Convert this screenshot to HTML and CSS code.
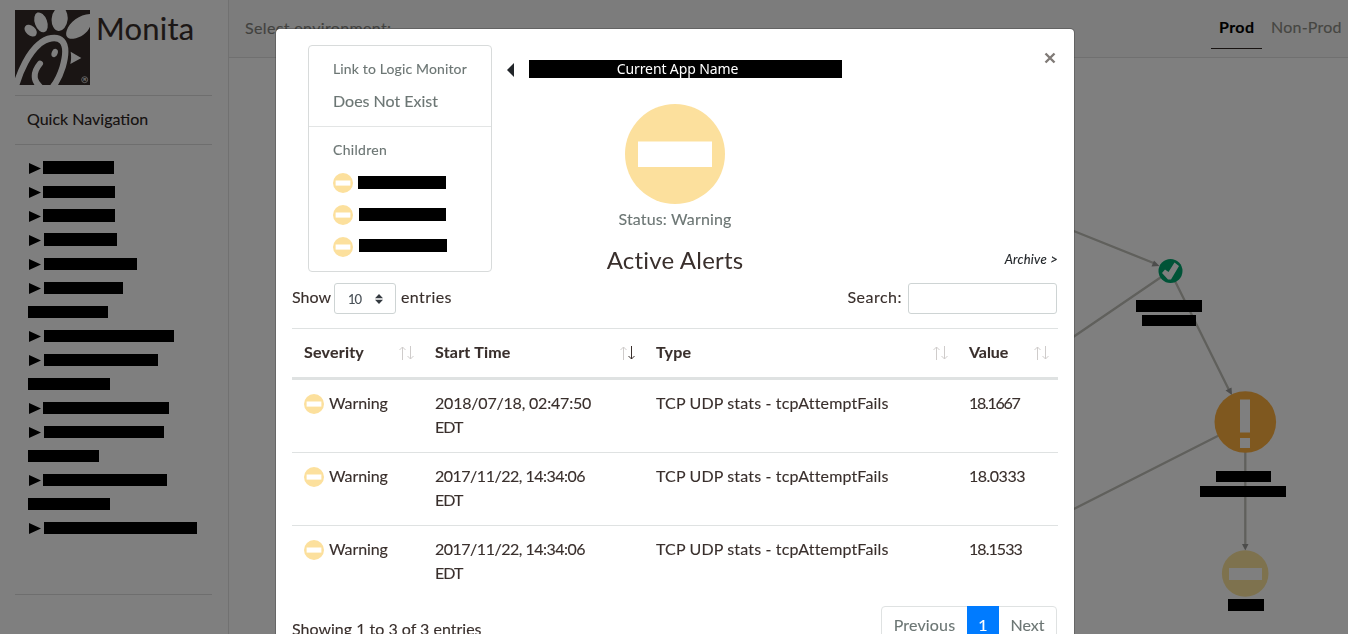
FILE: index.html
```html
<!DOCTYPE html>
<html lang="en">
<head>
<meta charset="utf-8">
<title>Monita</title>
<link rel="stylesheet" href="styles.css">
</head>
<body>
<svg class="defs" width="0" height="0">
  <symbol id="warn" viewBox="0 0 100 100"><circle cx="50" cy="50" r="50" fill="#fce09d"/><rect x="13" y="37.500" width="74" height="25.500" fill="#fff"/></symbol>
  <symbol id="tri" viewBox="0 0 12 11"><path d="M0 0L12 5.500L0 11Z" fill="#000"/></symbol>
  <symbol id="sort-up" viewBox="0 0 7 14"><path d="M3.500 14V1M.5 4L3.500 1L6.500 4"/></symbol>
  <symbol id="sort-down" viewBox="0 0 7 14"><path d="M3.500 0V13M.5 10L3.500 13L6.500 10"/></symbol>
</svg>
<div class="app">
  <aside class="sidebar">
    <div class="brand">
      <svg class="logo" viewBox="15 15 225 225">
        <rect x="15" y="15" width="225" height="225" fill="#342b29"/>
        <g fill="#fff">
          <ellipse cx="62" cy="77" rx="14.500" ry="21" transform="rotate(-50 62 77)"/>
          <ellipse cx="93" cy="52" rx="18.500" ry="31" transform="rotate(-20 93 52)"/>
          <ellipse cx="149" cy="42" rx="24" ry="36" transform="rotate(6 149 42)"/>
          <path d="M240 27V65C232 84 212 98 190 101C172 103 165 93 170 77C178 51 209 28 240 27Z"/>
          <ellipse cx="134" cy="144" rx="9" ry="13" transform="rotate(20 134 144)"/>
          <path d="M182 140L214 159L181 177C184 165 184 152 182 140Z"/>
        </g>
        <path d="M15 253C30 195 58 142 88 117C108 99 141 92 156 108C172 125 166 158 158 186C152 206 144 225 129 245" fill="none" stroke="#fff" stroke-width="19"/>
        <path d="M90 176C80 188 72 207 75 222C78 235 84 240 91 246" fill="none" stroke="#fff" stroke-width="18" stroke-linecap="round"/>
        <circle cx="224" cy="224" r="9" fill="none" stroke="#fff" stroke-width="2"/>
        <text class="reg" x="219.500" y="229">R</text>
      </svg>
      <span class="brand-name">Monita</span>
    </div>
    <div class="nav-title">Quick Navigation</div>
    <ul class="nav-list">
      <li><svg><use href="#tri"/></svg><i class="tall" style="width:71px"></i></li>
      <li><svg><use href="#tri"/></svg><i style="width:72px"></i></li>
      <li><svg><use href="#tri"/></svg><i class="tall" style="width:72px"></i></li>
      <li><svg><use href="#tri"/></svg><i class="tall in" style="width:73px"></i></li>
      <li><svg><use href="#tri"/></svg><i class="in" style="width:93px"></i></li>
      <li><svg><use href="#tri"/></svg><i class="in" style="width:79px"></i></li>
      <li><i style="width:80px"></i></li>
      <li><svg><use href="#tri"/></svg><i class="in" style="width:130px"></i></li>
      <li><svg><use href="#tri"/></svg><i class="in" style="width:114px"></i></li>
      <li><i style="width:82px"></i></li>
      <li><svg><use href="#tri"/></svg><i style="width:126px"></i></li>
      <li><svg><use href="#tri"/></svg><i class="in" style="width:120px"></i></li>
      <li><i style="width:71px"></i></li>
      <li><svg><use href="#tri"/></svg><i style="width:124px"></i></li>
      <li><i style="width:82px"></i></li>
      <li><svg><use href="#tri"/></svg><i class="in" style="width:153px"></i></li>
    </ul>
  </aside>
  <main class="main">
    <header class="topbar">
      <span class="env">Select environment:</span>
      <nav class="tabs"><a class="tab active">Prod</a><a class="tab">Non-Prod</a></nav>
    </header>
    <svg class="graph" viewBox="229 58 1119 576" width="1119" height="576">
      <g stroke="#c0c0b9" stroke-width="2.300">
        <path d="M1060 225.500L1156 264M1170 271L1060 346M1170 271L1229 390M1245.300 422L1060 516M1245.300 422V546" fill="none"/>
      </g>
      <g fill="#9a9a98">
        <path d="M1159.500 266L1151.500 266.500L1154 260.500Z"/>
        <path d="M1232 395L1225.500 390.500L1231.500 387.500Z"/>
        <path d="M1245.300 550.500L1242 544H1248.500Z"/>
      </g>
      <circle cx="1170.500" cy="271" r="12" fill="#00a66e"/>
      <path d="M1162 273L1165 269.500L1168.500 272L1174.500 262.500L1179 266L1171 279.500L1168 279.500Z" fill="#fff"/>
      <circle cx="1245.300" cy="422" r="30.800" fill="#ffb03f"/>
      <path d="M1240 399.500h10v33h-10zM1240 438h10v10h-10z" fill="#fff"/>
      <circle cx="1245.200" cy="573.500" r="23.300" fill="#fce49c"/>
      <rect x="1229" y="568" width="33" height="12" fill="#fff"/>
      <path d="M1136 300h66v12h-66zM1142 315h54v11h-54zM1216 471h55v11h-55zM1200 486h86v11h-86zM1228 599h36v12h-36z"/>
    </svg>
  </main>
</div>
<div class="backdrop">
  <section class="modal">
    <div class="head">
      <div class="card">
        <div class="card-part top"><h6>Link to Logic Monitor</h6><p>Does Not Exist</p></div>
        <div class="card-part kids">
          <h6 class="kids-title">Children</h6>
          <div class="kid"><svg class="dot"><use href="#warn"/></svg><i></i></div>
          <div class="kid second"><svg class="dot"><use href="#warn"/></svg><i></i></div>
          <div class="kid third"><svg class="dot"><use href="#warn"/></svg><i></i></div>
        </div>
      </div>
      <div class="center">
        <div class="app-row"><svg class="back" viewBox="0 0 7 14"><path d="M7 0V14L0 7Z" fill="#212529"/></svg><div class="app-name">Current App Name</div></div>
        <svg class="big"><use href="#warn"/></svg>
        <div class="status">Status: Warning</div>
        <h4>Active Alerts</h4>
      </div>
      <div class="right">
        <svg class="close" viewBox="0 0 12 12"><path d="M1.500 1.500L10.500 10.500M10.500 1.500L1.500 10.500" stroke="#807b77" stroke-width="2.400"/></svg>
        <span class="archive">Archive &gt;</span>
      </div>
    </div>
    <div class="controls">
      <label class="show"><span class="show-label">Show</span>
        <span class="select"><span>10</span><svg viewBox="0 0 8 10" width="8" height="10"><path d="M4 0L8 4.300H0ZM0 5.700H8L4 10Z" fill="#343a40"/></svg></span>
        <span class="entries">entries</span></label>
      <label class="search"><span class="search-label">Search:</span><span class="input"></span></label>
    </div>
    <table>
      <colgroup><col class="c1"><col class="c2"><col class="c3"><col class="c4"></colgroup>
      <thead><tr>
        <th><div><span>Severity</span><span class="sort"><svg><use href="#sort-up"/></svg><svg><use href="#sort-down"/></svg></span></div></th>
        <th><div><span>Start Time</span><span class="sort desc"><svg><use href="#sort-up"/></svg><svg><use href="#sort-down"/></svg></span></div></th>
        <th><div><span>Type</span><span class="sort"><svg><use href="#sort-up"/></svg><svg><use href="#sort-down"/></svg></span></div></th>
        <th><div><span class="value-head">Value</span><span class="sort"><svg><use href="#sort-up"/></svg><svg><use href="#sort-down"/></svg></span></div></th>
      </tr></thead>
      <tbody>
        <tr><td><div class="sev"><svg class="dot"><use href="#warn"/></svg><span>Warning</span></div></td><td><span class="date-a">2018/07/18, 02:47:50</span><br><span class="zone">EDT</span></td><td class="type">TCP UDP stats - tcpAttemptFails</td><td class="v1">18.1667</td></tr>
        <tr><td><div class="sev"><svg class="dot"><use href="#warn"/></svg><span>Warning</span></div></td><td><span class="date-b">2017/11/22, 14:34:06</span><br><span class="zone">EDT</span></td><td class="type">TCP UDP stats - tcpAttemptFails</td><td class="v2">18.0333</td></tr>
        <tr><td><div class="sev"><svg class="dot"><use href="#warn"/></svg><span>Warning</span></div></td><td><span class="date-b">2017/11/22, 14:34:06</span><br><span class="zone">EDT</span></td><td class="type">TCP UDP stats - tcpAttemptFails</td><td class="v3">18.1533</td></tr>
      </tbody>
    </table>
    <div class="foot">
      <span class="info">Showing 1 to 3 of 3 entries</span>
      <div class="pager"><span class="pg prev">Previous</span><span class="pg cur">1</span><span class="pg next">Next</span></div>
    </div>
  </section>
</div>
</body>
</html>
```
FILE: styles.css
```css
* { box-sizing: border-box; }
body { margin: 0; height: 634px; overflow: hidden; font-family: Lato, sans-serif; font-size: 16px; line-height: 24px; color: #392f2c; background: #fff; -webkit-text-stroke: .12px; }
ul, p, h4, h6 { margin: 0; padding: 0; font-weight: 400; }
svg { display: block; flex: none; }
span { white-space: nowrap; }
.defs { position: absolute; }
.app { display: flex; height: 634px; }
.sidebar { width: 229px; padding: 10px 16px 0 15px; border-right: 1px solid #e2e2e2; }
.brand { display: flex; gap: 6px; height: 86px; border-bottom: 1px solid #dcdcdc; }
.logo { width: 75px; height: 75px; }
.reg { font: bold 13px "Liberation Sans", sans-serif; fill: #fff; }
.brand-name { font-size: 31px; line-height: 37px; letter-spacing: .2px; }
.nav-title { height: 49px; padding: 11px 12px 0; border-bottom: 1px solid #dcdcdc; color: #2c2422; }
.nav-list { list-style: none; height: 450px; padding: 11px 13px 0; border-bottom: 1px solid #dcdcdc; }
.nav-list li { display: flex; height: 24px; align-items: flex-start; }
.nav-list svg { width: 12px; height: 11px; margin: 7px 2px 0 1px; }
.nav-list i { height: 12px; margin-top: 6px; background: #000; }
.nav-list i.tall { height: 13px; margin-top: 5px; }
.nav-list i.in { margin-left: 1px; }
.main { flex: 1; }
.topbar { display: flex; justify-content: space-between; height: 58px; padding: 0 6px 0 16px; background: #f8f8f8; border-bottom: 1px solid #e0e0e0; }
.env { padding-top: 16px; color: #84847f; letter-spacing: .35px; }
.tabs { display: flex; }
.tab { width: 80px; height: 49px; padding: 15px 0 0 9px; color: #8c8c84; letter-spacing: .22px; white-space: nowrap; }
.tab.active { width: 51px; padding-left: 8px; font-weight: 700; color: #000; border-bottom: 1px solid #302622; letter-spacing: .4px; }
.backdrop { position: fixed; inset: 0; background: rgba(0,0,0,.5); display: flex; justify-content: center; align-items: flex-start; padding: 28px 0 0 2px; overflow: hidden; }
.modal { width: 800px; height: 640px; flex: none; background: #fff; background-clip: padding-box; border: 1px solid rgba(0,0,0,.2); border-radius: 5px; padding: 16px 16px 0; }
.head { display: grid; grid-template-columns: 200px 366px 200px; height: 238px; }
.card { width: 184px; height: 227px; margin-left: 16px; border: 1px solid #d8dbdb; border-radius: 4px; color: #6c7674; }
.card-part { padding-left: 24px; }
.card-part.top { height: 81px; padding-top: 11px; border-bottom: 1px solid #e3e5e5; }
.card h6 { font-size: 14px; letter-spacing: .14px; }
.card p { margin-top: 8px; }
.kids { padding-top: 11px; }
.kid { display: flex; height: 32px; padding-top: 10px; }
.kid i { width: 88px; height: 13px; margin: 3px 0 0 5px; background: #000; }
.card .kids-title { height: 25px; letter-spacing: .3px; }
.kid.second i { width: 87px; margin-left: 6px; }
.kid.third i { margin: 2px 0 0 6px; }
.dot { width: 20px; height: 20px; }
.center { display: flex; flex-direction: column; align-items: center; }
.app-row { display: flex; align-self: stretch; align-items: flex-start; padding: 15px 0 0 15px; gap: 15px; }
.back { width: 7px; height: 14px; margin-top: 3px; }
.app-name { width: 313px; height: 18px; padding-right: 16px; text-align: center; background: #000; color: #fff; font: 14px/18px "Noto Sans", sans-serif; letter-spacing: -.12px; -webkit-text-stroke: 0; }
.big { width: 100px; height: 100px; margin-top: 26px; }
.status { margin-top: 3px; color: #6c7674; letter-spacing: .14px; }
.center h4 { margin-top: 14px; font-size: 24px; line-height: 30px; letter-spacing: .2px; -webkit-text-stroke: 0; }
.right { display: flex; flex-direction: column; align-items: flex-end; }
.close { width: 12px; height: 12px; margin: 7px 2px 0 0; }
.archive { margin-top: 183px; font-size: 13px; font-style: italic; color: #212529; letter-spacing: .25px; }
.controls { display: flex; justify-content: space-between; height: 45px; padding-right: 1px; }
.show, .search { display: flex; align-items: flex-start; line-height: 28px; }
.show-label { width: 38px; }
.select { display: flex; justify-content: space-between; align-items: center; width: 62px; height: 31px; margin: 0 5px 0 4px; padding: 0 12px 0 13px; border: 1px solid #ced4d4; border-radius: 3px; font-size: 13px; letter-spacing: -1px; color: #495057; }
.entries { letter-spacing: .4px; }
.search-label { letter-spacing: .5px; }
.input { width: 149px; height: 31px; margin-left: 6px; border: 1px solid #ced4d4; border-radius: 3px; }
table { width: 766px; table-layout: fixed; border-collapse: separate; border-spacing: 0; }
.c1 { width: 131px; } .c2 { width: 221px; } .c3 { width: 313px; } .c4 { width: 101px; }
th { height: 52px; padding: 0 9px 2px 12px; border-top: 1px solid #dfe2e2; border-bottom: 3px solid #dfe2e2; text-align: left; letter-spacing: .22px; }
th div { display: flex; justify-content: space-between; align-items: center; }
.value-head { letter-spacing: -.05px; }
.sort { display: flex; gap: 1px; padding-top: 1px; fill: none; stroke: #cfcccb; }
.sort svg { width: 7px; height: 14px; }
.desc svg + svg { stroke: #392f2c; }
td { height: 72px; padding: 11px 0 12px 12px; vertical-align: top; }
tr + tr td { height: 73px; border-top: 1px solid #dfe2e2; }
.sev { display: flex; align-items: flex-start; gap: 5px; letter-spacing: -.1px; }
.sev .dot { margin-top: 3px; }
.type { letter-spacing: .15px; }
.zone { letter-spacing: -.9px; }
.date-a { letter-spacing: -.2px; }
.date-b { letter-spacing: -.5px; }
.v1 { letter-spacing: -1.3px; }
.v2 { letter-spacing: -.5px; }
.v3 { letter-spacing: -.95px; }
.foot { display: flex; justify-content: space-between; padding: 8px 1px 0 0; }
.info { padding-top: 11px; }
.pager { display: flex; height: 38px; color: #6c7674; line-height: 35px; border: 1px solid #dfe2e2; border-radius: 4px; }
.pg { text-align: center; }
.prev { width: 85px; letter-spacing: .15px; }
.cur { width: 32px; margin: -1px 0; line-height: 37px; background: #007bff; color: #fff; }
.next { width: 57px; }
```
